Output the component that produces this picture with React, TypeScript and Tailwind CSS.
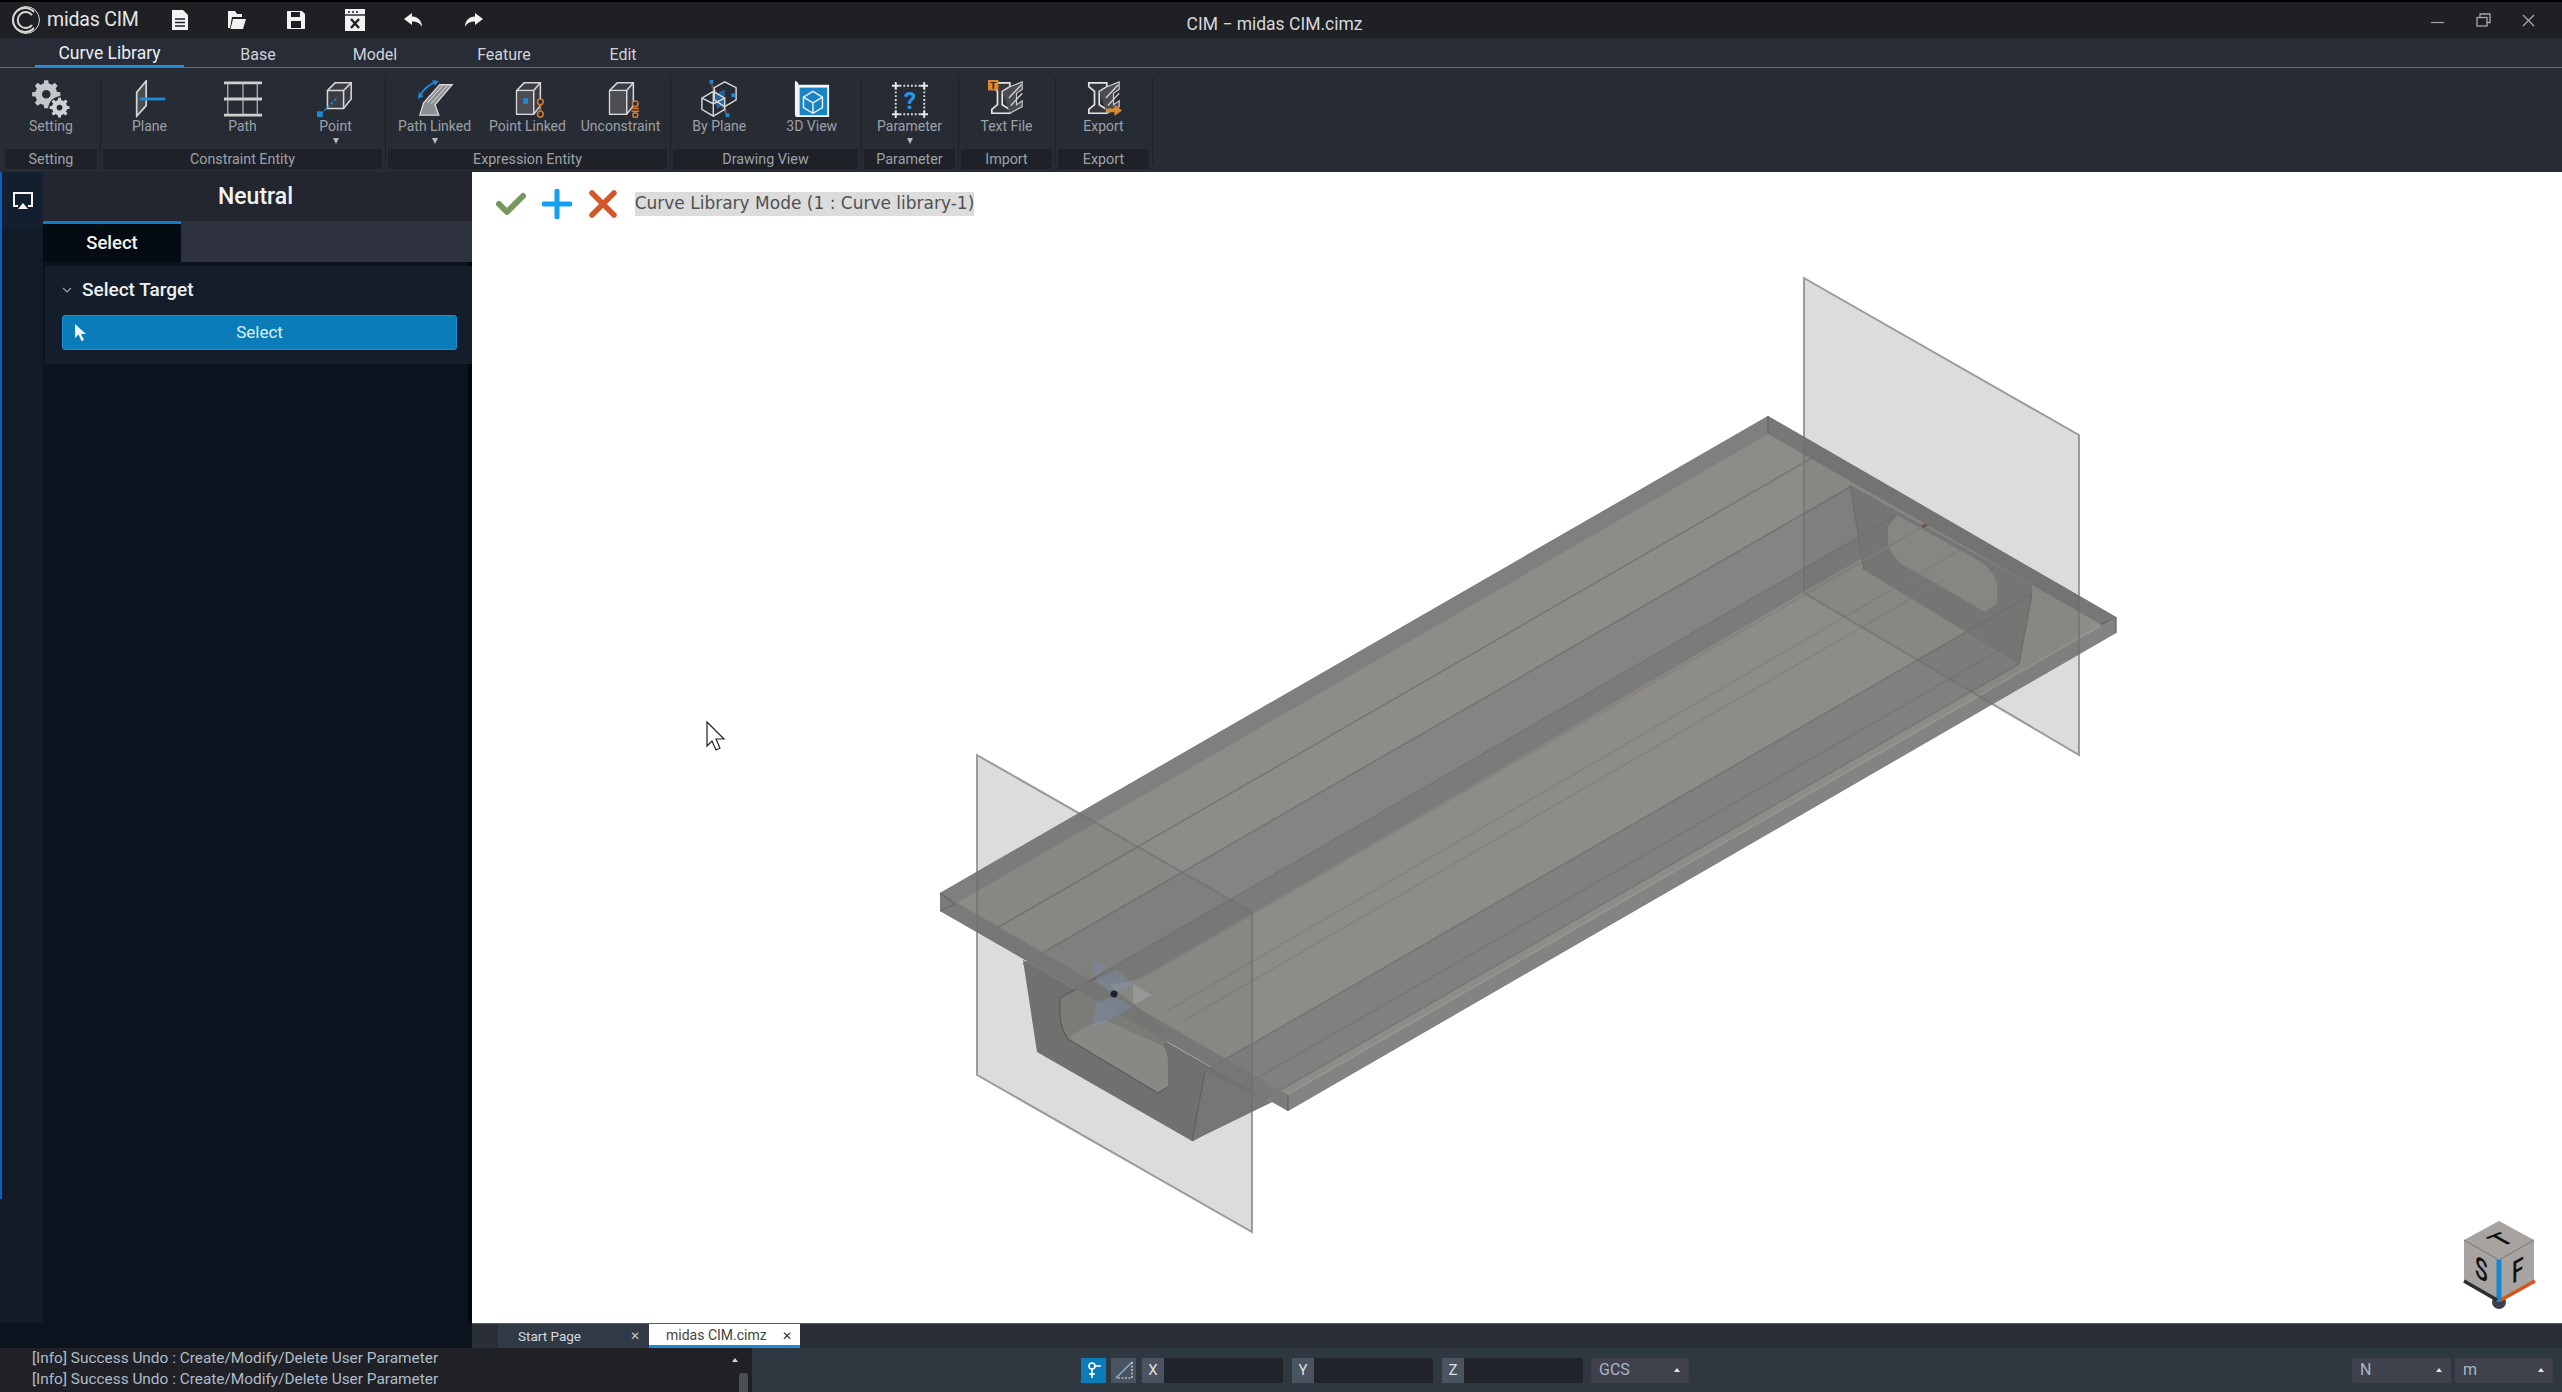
import type { ReactNode } from "react"

// toothed wheel outline, used by the Setting icon
function gearPath(cx: number, cy: number, outer: number, inner: number, teeth: number) {
  const pts: string[] = []
  for (let i = 0; i < teeth; i++) {
    const a = (i / teeth) * Math.PI * 2
    const s = (Math.PI * 2) / teeth
    const corners: [number, number][] = [
      [inner, a - s * 0.32],
      [outer, a - s * 0.18],
      [outer, a + s * 0.18],
      [inner, a + s * 0.32],
    ]
    corners.forEach(([r, t]) => pts.push(`${(cx + r * Math.cos(t)).toFixed(2)} ${(cy + r * Math.sin(t)).toFixed(2)}`))
  }
  return `M${pts.join(" L")} Z`
}

const Cube = ({ children }: { children?: ReactNode }) => (
  <>
    <path d="M8 11 L16 3 H33 V27 L26 36 H8 Z" fill="#3a3d44" stroke="#d8d8d8" strokeWidth="1.6" />
    <path d="M8 11 H26 V36 M26 11 L33 3" fill="none" stroke="#d8d8d8" strokeWidth="1.6" />
    <path d="M9 12 H25 V35 H9 Z" fill="#4c4e53" />
    {children}
  </>
)

const Beam = () => (
  <>
    <path d="M4 3 H23 V7 L15 12 V26 L23 31 V35 H4 V31 L10 26 V12 L4 7 Z" fill="#35373c" stroke="#e5e5e5" strokeWidth="1.8" />
    <path d="M15 12 L23 7 L36 2 V10 L30 14 V26 L36 22 V28 L23 35" fill="#4b4d52" stroke="#cfcfcf" strokeWidth="1.2" />
    <path d="M22 19 L35 5 M24 27 L36 14" stroke="#d5d5d5" strokeWidth="1.4" fill="none" />
  </>
)

const ribbonIcons: Record<string, ReactNode> = {
  Setting: (
    <>
      <path d={gearPath(15, 15, 15, 11, 8)} fill="#c4c6c9" />
      <circle cx="15" cy="15" r="11.5" fill="#c4c6c9" />
      <circle cx="15" cy="15" r="4.5" fill="#272b34" />
      <circle cx="29" cy="29" r="11.5" fill="#272b34" />
      <path d={gearPath(29, 29, 10.5, 7.5, 8)} fill="#cfd1d4" />
      <circle cx="29" cy="29" r="8" fill="#cfd1d4" />
      <circle cx="29" cy="29" r="3" fill="#272b34" />
    </>
  ),
  Plane: (
    <>
      <path d="M6 13 L16 1 V27 L6 38 Z" fill="#4a4c50" stroke="#d6d6d6" strokeWidth="1.8" />
      <path d="M9 20 H36" stroke="#1f8ad6" strokeWidth="3" />
    </>
  ),
  Path: (
    <>
      <path d="M0 3 H40 M0 20 H40 M0 37 H40" stroke="#d0d0d0" strokeWidth="3" />
      <path d="M4 3 V37 M20 3 V37 M35 3 V37" stroke="#c4c4c4" strokeWidth="1.2" />
    </>
  ),
  Point: (
    <>
      <path d="M11 11 L19 3 H36 V20 L28 30 H11 Z" fill="#3a3d44" stroke="#d8d8d8" strokeWidth="1.6" />
      <path d="M11 11 H28 V30 M28 11 L36 3" fill="none" stroke="#d8d8d8" strokeWidth="1.6" />
      <path d="M4 36 L22 18" stroke="#1f8ad6" strokeWidth="1.6" strokeDasharray="3 2" />
      <rect x="0" y="33" width="6" height="6" fill="#1f8ad6" />
    </>
  ),
  "Path Linked": (
    <>
      <path d="M4 37 L8 24 L25 5 H38 L20 26 L24 37 Z" fill="#8c8e92" stroke="#d8d8d8" strokeWidth="1.4" />
      <path d="M12 24 L28 6 M16 25 L33 6" stroke="#e4e4e4" strokeWidth="1" />
      <path d="M4 17 Q10 6 21 2" fill="none" stroke="#1f8ad6" strokeWidth="2" />
      <path d="M2 20 L3 13 L8 17 Z M24 1 L17 0 L20 6 Z" fill="#1f8ad6" />
    </>
  ),
  "Point Linked": (
    <Cube>
      <rect x="15" y="19" width="5" height="6" fill="#1f8ad6" />
      <path d="M33 20 V34" stroke="#d07c35" strokeWidth="1.6" />
      <circle cx="33" cy="23" r="3" fill="#272b34" stroke="#d07c35" strokeWidth="1.6" />
      <circle cx="33" cy="36" r="3" fill="#272b34" stroke="#d07c35" strokeWidth="1.6" />
    </Cube>
  ),
  Unconstraint: (
    <Cube>
      <circle cx="35" cy="25" r="3" fill="#272b34" stroke="#d07c35" strokeWidth="1.6" />
      <path d="M31 30 H39 M31 33 H39" stroke="#d07c35" strokeWidth="1.6" />
      <circle cx="35" cy="37" r="2.6" fill="#272b34" stroke="#d07c35" strokeWidth="1.6" />
    </Cube>
  ),
  "By Plane": (
    <>
      <path d="M12 2 L28 32 V38 L12 8 Z" fill="#6b5650" />
      <path d="M14 16 L26 10 V27 L18 30 Z" fill="#27629b" />
      <path d="M2 19 L14 12 L26 19 V31 L14 38 L2 31 Z M14 12 V38 M14 25 L2 19 M14 25 L26 19" fill="none" stroke="#d8d8d8" strokeWidth="1.5" />
      <path d="M15 8 L26 2 L38 8 V21 L26 28 L15 21 Z" fill="none" stroke="#d8d8d8" strokeWidth="1.5" />
      <rect x="10" y="0" width="4" height="4" fill="#1f8ad6" />
      <rect x="33" y="14" width="4" height="4" fill="#1f8ad6" />
      <rect x="27" y="35" width="4" height="4" fill="#1f8ad6" />
    </>
  ),
  "3D View": (
    <>
      <path d="M2 36 V1 Q5 1 6 5 H38 V39 H5 Q2 39 2 36 Z" fill="#f0f4f6" />
      <rect x="7" y="8" width="29" height="29" fill="#1a83c6" />
      <path d="M21 12 L31 18 V29 L21 35 L11 29 V18 Z M11 18 L21 24 L31 18 M21 24 V35" fill="none" stroke="#e8f3fa" strokeWidth="1.5" />
    </>
  ),
  Parameter: (
    <>
      <rect x="5" y="6" width="30" height="30" fill="none" stroke="#dcdcdc" strokeWidth="2" strokeDasharray="2 2" />
      <path d="M5 2 V10 M1 6 H9 M35 2 V10 M31 6 H39 M5 32 V40 M1 36 H9 M35 32 V40 M31 36 H39" stroke="#e6e6e6" strokeWidth="2" />
      <text x="20" y="31" textAnchor="middle" fontSize="26" fontWeight="700" fill="#1e9bea" fontFamily="Roboto, sans-serif">?</text>
    </>
  ),
  "Text File": (
    <>
      <Beam />
      <rect x="0" y="0" width="11" height="11" fill="#d98a32" />
      <text x="5.5" y="9.5" textAnchor="middle" fontSize="10" fontWeight="700" fill="#202020" fontFamily="Roboto, sans-serif">T</text>
    </>
  ),
  Export: (
    <>
      <Beam />
      <path d="M22 30 H31 V26 L39 32 L31 38 V34 H22 Z" fill="#d98a32" />
    </>
  ),
}

const groups = [
  { label: "Setting", width: "w-[92px]", items: [{ name: "Setting" }] },
  { label: "Constraint Entity", width: "w-[279px]", items: [{ name: "Plane" }, { name: "Path" }, { name: "Point", more: true }] },
  { label: "Expression Entity", width: "w-[279px]", items: [{ name: "Path Linked", more: true }, { name: "Point Linked" }, { name: "Unconstraint" }] },
  { label: "Drawing View", width: "w-[185px]", items: [{ name: "By Plane" }, { name: "3D View" }] },
  { label: "Parameter", width: "w-[91px]", items: [{ name: "Parameter", more: true }] },
  { label: "Import", width: "w-[91px]", items: [{ name: "Text File" }] },
  { label: "Export", width: "w-[91px]", items: [{ name: "Export" }] },
]

const tabs = [
  { label: "Curve Library", width: "w-[149px]", active: true },
  { label: "Base", width: "w-[148px]" },
  { label: "Model", width: "w-[86px]" },
  { label: "Feature", width: "w-[172px]" },
  { label: "Edit", width: "w-[66px]" },
]

function TitleBar() {
  return (
    <div className="flex h-[38px] shrink-0 items-center border-t-2 border-black bg-[#1e2024] text-white">
      <div className="flex flex-1 items-center">
        <svg viewBox="0 0 30 30" className="ml-[11px] h-[30px] w-[30px]" fill="none" stroke="#d8d8d8">
          <path d="M23 7 A12 12 0 1 0 23 23" strokeWidth="2" />
          <path d="M21 10 A8 8 0 1 0 21 20" strokeWidth="2" />
          <circle cx="15" cy="15" r="13.5" strokeWidth="1" />
        </svg>
        <span className="ml-[6px] w-[100px] whitespace-nowrap text-[19.5px] tracking-[-0.2px] text-[#e4e4e4]">midas CIM</span>
        <div className="ml-[25px] flex items-center gap-[39px]">
          <svg viewBox="0 0 16 20" className="h-[20px] w-[16px]">
            <path d="M0 0 H11 L16 5 V20 H0 Z" fill="#f2f2f2" />
            <path d="M3 9 H13 M3 12.5 H13 M3 16 H13" stroke="#1e2024" strokeWidth="1.4" />
          </svg>
          <svg viewBox="0 0 20 20" className="h-[20px] w-[20px]">
            <path d="M1 1 H8 L10 4 H15 V7 H5 L3 18 H1 Z" fill="#f2f2f2" />
            <path d="M6 9 H19 L16 19 H3.5 Z" fill="#f2f2f2" />
          </svg>
          <svg viewBox="0 0 20 20" className="h-[20px] w-[20px]">
            <path d="M1 1 H16 L19 4 V19 H1 Z" fill="#f2f2f2" />
            <rect x="5" y="2" width="9" height="5" fill="#1e2024" />
            <rect x="5" y="11" width="10" height="7" fill="#1e2024" />
          </svg>
          <svg viewBox="0 0 20 22" className="h-[22px] w-[20px]">
            <rect x="0" y="0" width="20" height="22" fill="#f2f2f2" />
            <path d="M0 6 H20" stroke="#1e2024" strokeWidth="1.4" />
            <path d="M3 3 H5 M7 3 H9 M11 3 H13" stroke="#1e2024" strokeWidth="1.6" />
            <path d="M6 10 L14 19 M14 10 L6 19" stroke="#1e2024" strokeWidth="2.4" />
          </svg>
          <svg viewBox="0 0 20 16" className="h-[16px] w-[20px]">
            <path d="M8 1 L0 7 L8 13 V9.5 C13 9.5 16 11 18 15 C18 9 14 4.5 8 4.5 Z" fill="#f2f2f2" />
          </svg>
          <svg viewBox="0 0 20 16" className="h-[16px] w-[20px]">
            <path d="M12 1 L20 7 L12 13 V9.5 C7 9.5 4 11 2 15 C2 9 6 4.5 12 4.5 Z" fill="#f2f2f2" />
          </svg>
        </div>
      </div>
      <div className="mt-[8px] pl-[14px] text-[17.5px] text-[#d5d8dc]">CIM − midas CIM.cimz</div>
      <div className="flex flex-1 items-center justify-end pr-[27px]">
        <div className="flex items-center gap-[31px]">
          <svg viewBox="0 0 14 14" className="h-[14px] w-[14px]"><path d="M0 9.5 H13" stroke="#a8a8a8" strokeWidth="1.2" /></svg>
          <svg viewBox="0 0 15 14" className="h-[14px] w-[15px]" fill="none" stroke="#a8a8a8" strokeWidth="1.3">
            <rect x="1" y="4.5" width="10" height="8.5" />
            <path d="M4 4.5 V1 H14 V9.5 H11" />
          </svg>
          <svg viewBox="0 0 13 13" className="h-[13px] w-[13px]"><path d="M1 1 L12 12 M12 1 L1 12" stroke="#a8a8a8" strokeWidth="1.3" /></svg>
        </div>
      </div>
    </div>
  )
}

function Ribbon() {
  return (
    <div className="flex h-[104px] shrink-0 bg-[#272b34] pl-[5px]">
      {groups.map((g) => (
        <div key={g.label} className="flex">
          <div className={`flex flex-col ${g.width}`}>
            <div className="flex h-[81px] pt-[12px]">
              {g.items.map((item) => (
                <div key={item.name} className="flex flex-1 flex-col items-center">
                  <svg viewBox="0 0 40 40" className="h-[38px] w-[38px]">{ribbonIcons[item.name]}</svg>
                  <span className="whitespace-nowrap text-[14px] leading-[16px] text-[#9ca1a9]">{item.name}</span>
                  {item.more && <span className="mt-[4px] h-0 w-0 border-x-[3.5px] border-t-[6px] border-x-transparent border-t-[#b5b8bd]" />}
                </div>
              ))}
            </div>
            <div className="flex h-[20px] items-center justify-center bg-[#1e2127] pt-[2px] text-[14.3px] text-[#9ca1a9]">{g.label}</div>
          </div>
          <div className="mx-[2.5px] mt-[9px] h-[88px] w-px bg-[#1c1f25]" />
        </div>
      ))}
    </div>
  )
}

function Sidebar() {
  return (
    <div className="flex w-[472px] shrink-0 border-r-4 border-[#05070a] bg-[#0b131e]">
      <div className="flex w-[43px] shrink-0 flex-col bg-[#111b28]">
        <div className="flex h-[57px] items-center justify-center border-l-2 border-[#0b5fc4] bg-[#131f2e]">
          <svg viewBox="0 0 20 18" className="h-[18px] w-[20px]">
            <path d="M5 14 H1 V1 H19 V14 H15" fill="none" stroke="#f5f5f5" strokeWidth="2" />
            <path d="M10 11 L15 17 H5 Z" fill="#f5f5f5" />
          </svg>
        </div>
        <div className="h-[970px] w-[2px] bg-[#0b5fc4]" />
      </div>
      <div className="flex flex-1 flex-col">
        <div className="flex h-[49px] shrink-0 items-center justify-center bg-[#23262f] pr-[8px] pt-[2px] text-[23px] font-medium text-[#f0f3f6]">Neutral</div>
        <div className="flex h-[41px] shrink-0 bg-[#2d323e]">
          <div className="flex w-[138px] items-center justify-center border-t-[3px] border-[#0f7cc4] bg-[#050b13] pt-[1px] text-[18.5px] font-medium text-[#f2f4f6]">Select</div>
        </div>
        <div className="mx-[2px] mt-[4px] h-[98px] bg-[#141e2b] px-[17px] pt-[11px]">
          <div className="flex items-center gap-[10px] text-[19px] font-medium leading-[26px] text-[#eef1f4]">
            <svg viewBox="0 0 10 6" className="h-[6px] w-[10px]"><path d="M1 1 L5 5 L9 1" fill="none" stroke="#9aa0a8" strokeWidth="1.2" /></svg>
            Select Target
          </div>
          <div className="relative mt-[12px] flex h-[35px] w-[395px] items-center justify-center rounded-[3px] border border-[#1b8fdc] bg-[#0a7db8] text-[17px] text-[#dfeef8]">
            <svg viewBox="0 0 12 18" className="absolute left-[11px] top-[8px] h-[18px] w-[12px]"><path d="M1 0 V14 L4.5 10.5 L7.5 17 L10 16 L7 10 H12 Z" fill="#f2f5f8" /></svg>
            Select
          </div>
        </div>
      </div>
    </div>
  )
}

function Viewport() {
  return (
    <div className="relative flex-1 overflow-hidden bg-white">
      <svg viewBox="472 172 2090 1151" className="absolute inset-0 h-full w-full">
        {/* back planes */}
        <polygon points="977,755 1252,912 1252,1232 977,1075" fill="#e4e4e4" />
        <polygon points="1804,278 2079,435 2079,755 1804,593" fill="#e4e4e4" />

        {/* girder body */}
        <polygon points="940,893 1768,416 2116,617 2116,633 1288,1111 940,911" fill="#8c8d89" />
        <polygon points="1023,964 1850,487 1897,515 1070,992" fill="#848482" />
        <polygon points="1070,992 1897,515 1888,543 1140,979" fill="#7b7b79" />
        <polygon points="1205,1071 2032,594 2019,664 1192,1141" fill="#80807e" />

        {/* far end section */}
        <polygon points="1850,485 1864,570 2019,664 2032,594 2032,585" fill="#797978" />
        <path d="M1897,515 L1888,527 L1888,543 Q1890,553 1900,563 L1985,612 L1997,603 L1997,585 Q1996,575 1983,563 Z" fill="#8b8c88" />

        {/* long edges */}
        <g fill="none" strokeWidth="1.3">
          <path d="M990,932 L1812,458" stroke="#717170" />
          <path d="M1023,964 L1850,487" stroke="#717170" />
          <path d="M1070,992 L1897,515" stroke="#737372" />
          <path d="M1167,1011 L1970,544" stroke="#7f807c" />
          <path d="M1183,1021 L1943,580" stroke="#7f807c" />
          <path d="M1250,1082 L2000,650" stroke="#747473" />
          <path d="M1205,1071 L2032,594" stroke="#717170" />
          <path d="M1192,1141 L2019,664" stroke="#737372" />
          <path d="M1140,979 L1922,527" stroke="#8b7f80" strokeWidth="2" />
          <path d="M1922,527 L1940,517" stroke="#6e4f50" strokeWidth="3" />
          <path d="M2032,594 L2019,664" stroke="#717170" />
          <path d="M1864,570 L1850,485" stroke="#717170" />
        </g>

        {/* near end section */}
        <polygon points="1023,960 1037,1052 1192,1141 1272,1102" fill="#747473" />
        <polygon points="1192,1141 1205,1071 1272,1102" fill="#7a7a79" />
        <path d="M1060,998 L1060,1014 Q1060,1028 1068,1039 L1158,1093 L1168,1087 L1168,1064 Q1168,1052 1163,1046 L1173,1034 L1100,978 Z" fill="#7f7f7c" />
        <path d="M1068,1039 Q1085,1024 1105,1020 L1163,1046 Q1168,1052 1168,1064 L1168,1087 L1158,1093 Z" fill="#8d8e8a" />
        <path d="M1096,978 L1060,998 L1060,1014 Q1060,1028 1068,1039 L1158,1093 L1168,1087" fill="none" stroke="#5f5f63" strokeWidth="1.2" />

        {/* slab edges */}
        <polygon points="940,893 1768,416 1768,434 955,904" fill="#7f7f7e" />
        <polygon points="1768,416 2116,617 2116,633 1768,434" fill="#777776" />
        <polygon points="2116,617 2116,633 2100,624" fill="#666668" />
        <polygon points="940,893 1288,1095 1288,1111 940,911" fill="#797978" opacity="0.9" />
        <polygon points="1288,1095 2116,617 2116,633 1288,1111" fill="#838381" />
        <path d="M1288,1094 L2100,626" stroke="#979794" strokeWidth="1.6" />
        <path d="M940,893 L955,904 L940,911 M1288,1095 V1111" fill="none" stroke="#666" strokeWidth="1.3" />
        <path d="M1768,416 V434" stroke="#666" strokeWidth="1.3" />
        <path d="M2116,617 V633" stroke="#666" strokeWidth="1.3" />
        <path d="M1192,1141 L1205,1071" stroke="#666" strokeWidth="1.3" />

        {/* planes see-through */}
        <polygon points="977,755 1252,912 1252,1232 977,1075" fill="#000000" fillOpacity="0.03" stroke="#6f6f6f" strokeOpacity="0.65" strokeWidth="2" />
        <polygon points="1804,278 2079,435 2079,755 1804,593" fill="#000000" fillOpacity="0.03" stroke="#6f6f6f" strokeOpacity="0.65" strokeWidth="2" />

        {/* origin marker */}
        <g fill="#7f90b0" fillOpacity="0.42">
          <polygon points="1093,959 1108,968 1093,977" />
          <polygon points="1095,980 1117,970 1133,984 1113,993" />
          <polygon points="1095,1004 1113,996 1133,1007 1093,1029" />
        </g>
        <polygon points="1133,984 1152,995 1133,1005" fill="#b0b2b2" fillOpacity="0.4" />
        <circle cx="1114" cy="994" r="3.5" fill="#1a2030" />

        {/* view cube */}
        <circle cx="2499" cy="1302" r="7" fill="#3c4048" />
        <polygon points="2499,1221 2534,1240 2534,1281 2499,1302 2464,1281 2464,1240" fill="#a6a3a0" />
        <path d="M2464,1240 L2499,1260 L2534,1240" fill="none" stroke="#77757a" strokeWidth="1" />
        <path d="M2499,1260 V1302" stroke="#1487d0" strokeWidth="5" />
        <path d="M2501,1300 L2535,1281" stroke="#d9531e" strokeWidth="3.5" />
        <path d="M2464,1281 L2497,1300" stroke="#2b2d30" strokeWidth="3.5" />
        <g fontFamily="Roboto, sans-serif" fontWeight="500" fontSize="30" fill="#101010">
          <text transform="matrix(0.7,0.4,0,1,2475,1276)">S</text>
          <text transform="matrix(0.7,-0.4,0,1,2512,1284)">F</text>
          <text fontSize="24" transform="matrix(1.07,-0.43,0.94,0.53,2501,1247)">T</text>
        </g>

        {/* mouse pointer */}
        <path d="M707,722 V746 L712,741 L716,750 L720,748 L716,739 H724 Z" fill="#ffffff" stroke="#222222" strokeWidth="1.2" />
      </svg>

      <div className="absolute left-[24px] top-[17px] flex items-center">
        <svg viewBox="0 0 30 24" className="h-[24px] w-[30px]"><path d="M3 12 L11 20 L27 4" fill="none" stroke="#76985f" strokeWidth="6" strokeLinecap="round" strokeLinejoin="round" /></svg>
        <svg viewBox="0 0 30 30" className="ml-[16px] h-[30px] w-[30px]"><path d="M15 2 V28 M2 15 H28" stroke="#14a0ef" strokeWidth="5" strokeLinecap="round" /></svg>
        <svg viewBox="0 0 28 28" className="ml-[17px] h-[28px] w-[28px]"><path d="M3 3 L25 25 M25 3 L3 25" stroke="#d2572b" strokeWidth="5.5" strokeLinecap="round" /></svg>
        <div className="ml-[18px] flex h-[24px] w-[339px] items-center justify-center whitespace-nowrap bg-[#dcdcdc] text-[17px] text-[#505050] [font-family:'DejaVu_Sans',sans-serif]">Curve Library Mode (1 : Curve library-1)</div>
      </div>
    </div>
  )
}

function DocTabs() {
  return (
    <div className="flex h-[25px] shrink-0 border-t border-[#5a5d63] bg-[#2a2e36] pl-[26px]">
      <div className="flex w-[151px] items-center bg-[#303a46] pl-[20px] pr-[9px] text-[13.5px] text-[#d5d9de]">
        <span className="flex-1">Start Page</span>
        <span className="text-[12px] text-[#c5c8cc]">✕</span>
      </div>
      <div className="flex w-[151px] items-center border-b-[3px] border-[#1a8bd8] bg-white pl-[17px] pr-[8px] pt-[2px] text-[14px] text-[#444]">
        <span className="flex-1">midas CIM.cimz</span>
        <span className="text-[12px] text-[#333]">✕</span>
      </div>
    </div>
  )
}

function CoordField({ label, width }: { label: string; width: string }) {
  return (
    <div className={`flex h-[25px] ${width}`}>
      <span className="flex w-[22px] items-center justify-center bg-[#4a5360] text-[15px] text-[#dde0e4]">{label}</span>
      <span className="flex-1 rounded-r-[2px] bg-[#20232a]" />
    </div>
  )
}

function SelectBox({ label, width }: { label: string; width: string }) {
  return (
    <div className={`flex h-[25px] items-center rounded-[3px] bg-[#3f424c] pl-[8px] pr-[9px] text-[16px] text-[#a6b6c8] ${width}`}>
      <span className="flex-1">{label}</span>
      <span className="h-0 w-0 border-x-[3.5px] border-b-[4px] border-x-transparent border-b-[#e5e5e5]" />
    </div>
  )
}

function StatusBar() {
  return (
    <div className="flex h-[44px] shrink-0 bg-[#2f3741]">
      <div className="relative w-[752px] bg-[#1f2126] pl-[32px] text-[15.4px] leading-[21px] text-[#aebccb]">
        <div>[Info] Success Undo : Create/Modify/Delete User Parameter</div>
        <div>[Info] Success Undo : Create/Modify/Delete User Parameter</div>
        <span className="absolute right-[14px] top-[10px] h-0 w-0 border-x-[3px] border-b-[4px] border-x-transparent border-b-[#d8d8d8]" />
        <span className="absolute bottom-0 right-[4px] h-[19px] w-[9px] rounded-t-[3px] bg-[#4a4e55]" />
      </div>
      <div className="flex flex-1 items-center pl-[329px] pr-[9px]">
        <div className="flex h-[25px] w-[25px] items-center justify-center bg-[#0a7db8]">
          <svg viewBox="0 0 16 20" className="h-[20px] w-[16px]" fill="none" stroke="#ffffff" strokeWidth="1.6">
            <circle cx="6" cy="6" r="3" />
            <path d="M6 9 V18 M3 14 H9 M9 6 H15" />
          </svg>
        </div>
        <div className="ml-[5px] flex h-[25px] w-[25px] items-center justify-center bg-[#4a5360]">
          <svg viewBox="0 0 20 20" className="h-[20px] w-[20px]" fill="none">
            <path d="M2 18 L18 2" stroke="#7fb4dc" strokeWidth="1.4" />
            <path d="M18 2 V18 H2" stroke="#e8e8e8" strokeWidth="1.2" strokeDasharray="2 1.5" />
          </svg>
        </div>
        <div className="ml-[6px]"><CoordField label="X" width="w-[141px]" /></div>
        <div className="ml-[9px]"><CoordField label="Y" width="w-[141px]" /></div>
        <div className="ml-[9px]"><CoordField label="Z" width="w-[141px]" /></div>
        <div className="ml-[8px]"><SelectBox label="GCS" width="w-[98px]" /></div>
        <div className="ml-auto flex gap-[4px]">
          <SelectBox label="N" width="w-[99px]" />
          <SelectBox label="m" width="w-[98px]" />
        </div>
      </div>
    </div>
  )
}

export default function App() {
  return (
    <div className="flex h-screen w-full flex-col overflow-hidden bg-[#0b131e] [font-family:Roboto,sans-serif]">
      <TitleBar />
      <div className="flex h-[30px] shrink-0 items-stretch border-b border-[#3a78c2] bg-[#282c36] pl-[35px]">
        {tabs.map((t) => (
          <div key={t.label} className={`flex items-center justify-center pt-[4px] ${t.width} ${t.active ? "border-b-2 border-[#2a8fe0] text-[17.5px] text-[#e8f0f6]" : "text-[16px] text-[#d0d3d8]"}`}>{t.label}</div>
        ))}
      </div>
      <Ribbon />
      <div className="flex min-h-0 flex-1">
        <Sidebar />
        <div className="flex min-w-0 flex-1 flex-col bg-white">
          <Viewport />
        </div>
      </div>
      <div className="relative shrink-0">
        <div className="ml-[472px]"><DocTabs /></div>
      </div>
      <StatusBar />
    </div>
  )
}
